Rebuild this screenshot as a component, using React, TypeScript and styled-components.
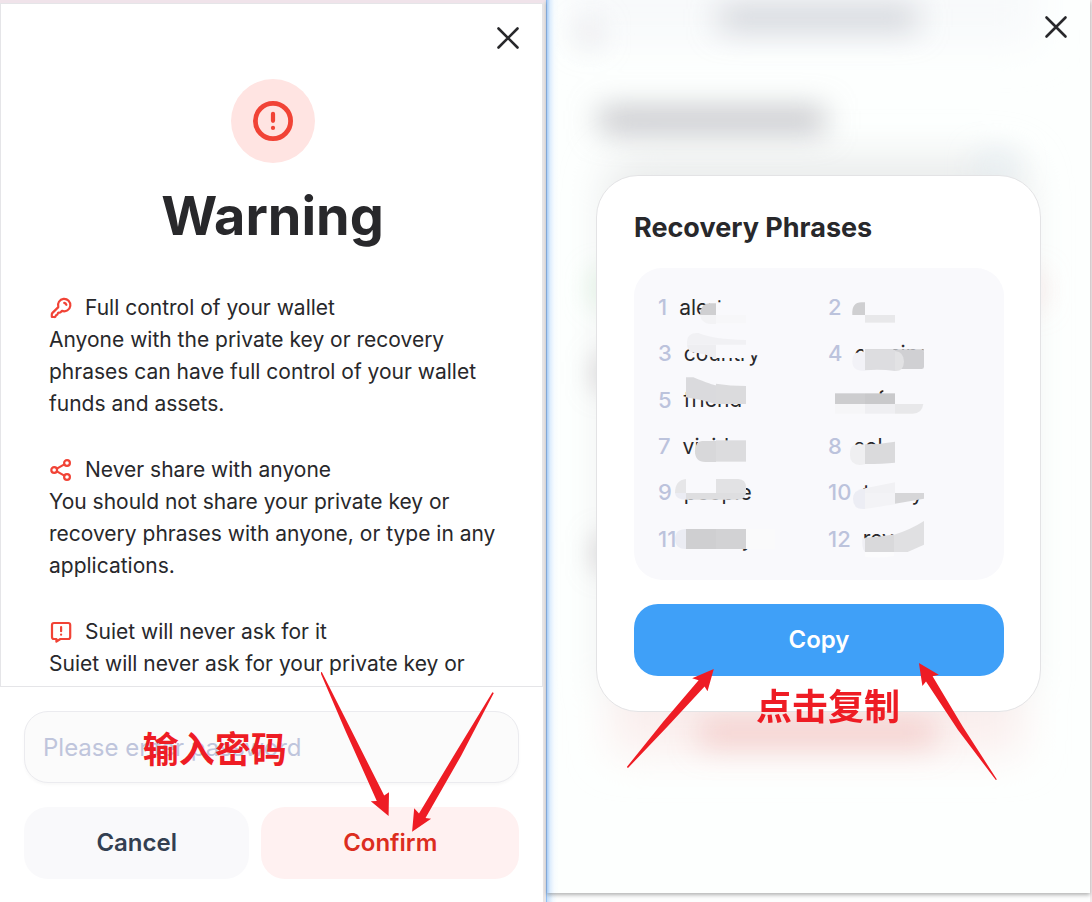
import React from "react";
import styled, { createGlobalStyle } from "styled-components";

const GlobalStyle = createGlobalStyle`
  *, *::before, *::after { box-sizing: border-box; }
  body {
    margin: 0;
    background: #ffffff;
    color: #28282b;
    font-family: Inter, "Noto Sans CJK SC", sans-serif;
  }
  h1, h2, h3, p, ol { margin: 0; padding: 0; }
  button, input { font-family: inherit; }
`;

const annotationRed = "#ee1c24";
const boxTint = "#f9f9fc";

const Page = styled.div`
  display: grid;
  grid-template-columns: minmax(0, 1fr) minmax(0, 1fr);
  min-height: 100vh;
`;

const WarningPane = styled.main`
  display: flex;
  flex-direction: column;
  background: #ffffff;
  border-top: 3px solid #f0e3ea;
  border-right: 3px solid #e9e6e7;
`;

const WarningBody = styled.section`
  position: relative;
  flex: 1;
  padding: 75px 46px 0 48px;
  border: 1px solid #e5e5e8;
`;

const CloseButton = styled.button<{ $top: number }>`
  position: absolute;
  top: ${(p) => p.$top}px;
  right: 22px;
  width: 24px;
  height: 24px;
  padding: 0;
  border: 0;
  background: none;
  color: #28282b;
  svg { display: block; }
`;

const AlertBadge = styled.div`
  display: flex;
  align-items: center;
  justify-content: center;
  width: 84px;
  height: 84px;
  margin: 0 auto;
  border-radius: 50%;
  background: #ffe4e2;
`;

const Heading = styled.h1`
  margin-top: 20px;
  font-size: 54px;
  line-height: 66px;
  font-weight: 700;
  text-align: center;
`;

const Notices = styled.div`
  display: flex;
  flex-direction: column;
  gap: 34px;
  margin-top: 43px;
`;

const NoticeTitle = styled.h2`
  display: flex;
  align-items: center;
  gap: 13px;
  font-size: 21px;
  line-height: 32px;
  font-weight: 400;
  color: #28282b;
  svg { margin-left: 1px; }
`;

const NoticeText = styled.p`
  font-size: 21px;
  line-height: 32px;
`;

const Footer = styled.form`
  display: flex;
  flex-direction: column;
  gap: 24px;
  padding: 24px 24px 23px;
`;

const Field = styled.div`
  position: relative;
`;

const PasswordInput = styled.input`
  display: block;
  width: 100%;
  height: 72px;
  padding: 0 18px;
  border: 1px solid #ebebef;
  border-radius: 24px;
  background: #fbfbfb;
  box-shadow: 0 2px 3px rgba(0, 0, 0, 0.03);
  font-size: 24px;
  &::placeholder { color: #bfc5dc; opacity: 1; }
`;

const Actions = styled.div`
  display: grid;
  grid-template-columns: 7fr 8fr;
  gap: 12px;
`;

const ActionSlot = styled.div`
  position: relative;
`;

const tones = {
  neutral: { bg: "#f9f9fb", fg: "#333f51" },
  danger: { bg: "#fff1f1", fg: "#dc2d20" },
  primary: { bg: "#3fa0f8", fg: "#ffffff" },
};

const ActionButton = styled.button<{ $tone: keyof typeof tones }>`
  display: block;
  width: 100%;
  height: 72px;
  padding: 0 0 2px;
  border: 0;
  border-radius: 24px;
  font-size: 24px;
  font-weight: 600;
  background: ${(p) => tones[p.$tone].bg};
  color: ${(p) => tones[p.$tone].fg};
`;

const Annotation = styled.span<{ $left: string; $top: number }>`
  position: absolute;
  left: ${(p) => p.$left};
  top: ${(p) => p.$top}px;
  font-family: "Noto Sans CJK SC", sans-serif;
  font-size: 36px;
  line-height: 40px;
  font-weight: 700;
  white-space: nowrap;
  color: ${annotationRed};
  pointer-events: none;
`;

const ArrowLayer = styled.svg<{ $left: string; $top: number }>`
  position: absolute;
  left: ${(p) => p.$left};
  top: ${(p) => p.$top}px;
  fill: ${annotationRed};
  pointer-events: none;
`;

const PhrasePane = styled.div`
  display: flex;
  flex-direction: column;
  padding: 0 2px 9px 0;
  border-left: 1px solid #94bff3;
  background: linear-gradient(90deg, #c4def9, #f2f9ff 6px, #fdfefe 10px, #fdfefe calc(100% - 2px), #f3e9eb calc(100% - 2px));
`;

const Overlay = styled.aside`
  position: relative;
  flex: 1;
  display: flex;
  align-items: center;
  padding: 0 49px 6px;
  overflow: hidden;
  background: #fdfffe;
  &::before {
    content: "";
    position: absolute;
    z-index: 1;
    inset: 0 auto 0 0;
    width: 12px;
    background: linear-gradient(90deg, #a9cdf7, rgba(216, 234, 252, 0.9) 3px, rgba(242, 249, 255, 0.6) 7px, rgba(253, 255, 254, 0));
  }
`;

const OverlayFrame = styled.div`
  display: flex;
  flex: 1;
  box-shadow: 0 2px 4px rgba(0, 0, 0, 0.3);
`;

const BlurredContent = styled.svg`
  position: absolute;
  inset: 0;
  width: 100%;
  height: 100%;
`;

const Modal = styled.section`
  position: relative;
  flex: 1;
  padding: 33px 36px 35px 37px;
  border: 1px solid #e3e3e5;
  border-radius: 42px;
  background: #ffffff;
`;

const ModalTitle = styled.h2`
  font-size: 27px;
  line-height: 38px;
  font-weight: 700;
`;

const PhraseBox = styled.div`
  position: relative;
  margin: 21px 0 24px;
  padding: 16px 24px 18px;
  border-radius: 28px;
  background: ${boxTint};
`;

const PhraseList = styled.ol`
  display: grid;
  grid-template-columns: 170px 1fr;
  grid-auto-rows: 1fr;
  height: 278px;
  list-style: none;
`;

const Phrase = styled.li`
  display: flex;
  align-items: center;
  gap: 12px;
`;

const PhraseNumber = styled.span`
  font-size: 22px;
  font-weight: 500;
  color: #bcc3dc;
`;

const PhraseWord = styled.span`
  font-size: 21px;
  white-space: pre;
`;

const Smears = styled.svg`
  position: absolute;
  left: 0;
  top: 0;
`;

const CloseIcon = () => (
  <svg width="24" height="24" viewBox="0 0 24 24" fill="none" stroke="currentColor" strokeWidth="2.6" strokeLinecap="round">
    <path d="M2.5 2.5 21.5 21.5M21.5 2.5 2.5 21.5" />
  </svg>
);

const AlertIcon = () => (
  <svg width="42" height="42" viewBox="0 0 42 42" fill="none" stroke="#f14336">
    <circle cx="21" cy="21" r="17.6" strokeWidth="4.8" />
    <path d="M21 13.8V20.8M21 27.8v.2" strokeWidth="4.2" strokeLinecap="round" />
  </svg>
);

const NoticeIcon = ({ children }: { children: React.ReactNode }) => (
  <svg width="22" height="22" viewBox="0 0 22 22" fill="none" stroke="#f14336" strokeWidth="2.2" strokeLinecap="round" strokeLinejoin="round">
    {children}
  </svg>
);

const notices = [
  {
    title: "Full control of your wallet",
    text: "Anyone with the private key or recovery phrases can have full control of your wallet funds and assets.",
    icon: (
      <NoticeIcon>
        <path d="M8.3 10.1A6.2 6.2 0 1 1 12 13.9L10.6 15.3Q10 15.9 9 15.7T7.7 16.7 6.6 18 5.6 19.2 4.4 20H2.4Q1.8 20 1.8 19.4V17.4Q1.8 16.6 2.5 15.9Z" />
        <path d="M14.2 5.9Q15.8 6.2 16.4 7.8" />
      </NoticeIcon>
    ),
  },
  {
    title: "Never share with anyone",
    text: "You should not share your private key or recovery phrases with anyone, or type in any applications.",
    icon: (
      <NoticeIcon>
        <circle cx="17" cy="4" r="2.9" />
        <circle cx="4.2" cy="11" r="2.9" />
        <circle cx="17" cy="18" r="2.9" />
        <path d="M6.9 9.6 14.3 5.4M6.9 12.4l7.4 4.2" />
      </NoticeIcon>
    ),
  },
  {
    title: "Suiet will never ask for it",
    text: "Suiet will never ask for your private key or",
    icon: (
      <NoticeIcon>
        <path d="M4 2H18.2Q20.2 2 20.2 4V16Q20.2 18 18.2 18H10.4L6.4 20.6V18H4Q2 18 2 16V4Q2 2 4 2Z" />
        <path d="M11.1 6V10.2M11.1 13.6v.1" />
      </NoticeIcon>
    ),
  },
];

const phrases = ["alert", "", "country", "cassino", "friend", "suf", "vivid", "sol", "people", "t       y", "         y", "rev"];

const PhraseSmears = () => (
  <Smears width="369" height="312" viewBox="0 0 369 312" aria-hidden="true">
    <g transform="translate(-4 2) scale(0.33333)">
      <path fill={boxTint} d="M240 97H352V142H240Z" />
      <path fill="#cfcfd1" d="M258 100V135H210Q212 100 240 100Z" />
      <path fill="#f3f3f5" d="M210 135H258V162H240Q214 160 210 135Z" />
      <path fill="#f7f7f9" d="M258 135H348V160H258Z" />
      <path fill="#cfcfd1" d="M705 97V135H667Q664 97 695 97Z" />
      <path fill="#e8e8ea" d="M705 135H795V158H705Z" />
      <path fill={boxTint} d="M240 210H400V256H362V264H258V260H240Z" />
      <path fill="#f1f1f4" d="M171 224V215Q172 187 205 189 250 208 348 210V224Z" />
      <path fill="#eeeef1" d="M171 224H258V266Q225 250 182 246 173 240 171 224Z" />
      <path fill={boxTint} d="M700 236H790V242H700ZM700 242H925V300H700ZM880 220H925V300H880Z" />
      <path fill="#d0d0d3" d="M705 238H876Q882 238 882 246V290Q882 297 875 297H705Z" />
      <path fill="#f2f2f7" d="M705 246V303Q667 305 667 274 667 252 680 248Z" />
      <path fill="#dddde0" d="M705 240H795V303Q750 297 705 301Z" />
      <path fill="#e2e2e4" d="M795 243Q822 246 822 275 820 305 795 303Z" />
      <path fill="#dadadd" d="M168 322H190Q250 346 258 346V402Q210 388 168 382Z" />
      <path fill="#dbdbdd" d="M258 341Q300 348 348 348V402H258Z" />
      <path fill={boxTint} d="M590 360H640V425H590ZM615 355H735V371H615ZM760 355H830V402H760ZM615 402H850V432H615ZM150 413H360V430H150Z" />
      <path fill="#cdcdcf" d="M615 370H705V402H615Z" />
      <path fill="#c9c9cb" d="M705 370H795V402H705Z" />
      <path fill="#f6f6f8" d="M615 402H705V431H615Z" />
      <path fill="#efeff2" d="M705 402H795V431H705Z" />
      <path fill="#e8e8ea" d="M795 402H880Q876 431 848 431H795Z" />
    </g>
    <g transform="translate(-4 142) scale(0.33333)">
      <path fill="#d8d8da" d="M258 93V156H226Q195 156 195 124 196 93 216 93Z" />
      <path fill="#dcdcde" d="M258 91H348V155H258Z" />
      <path fill={boxTint} d="M765 80H860V140H795V98H765Z" />
      <path fill="#efeff1" d="M705 103V163Q660 172 660 134 660 105 676 104Z" />
      <path fill="#dadadc" d="M705 103Q750 103 795 95V158Q760 162 705 162Z" />
      <path fill={boxTint} d="M150 207H345V252H150Z" />
      <path fill="#e6e6e8" d="M168 207V249H135Q135 210 168 207Z" />
      <path fill="#ebecf3" d="M135 249H168V269Q137 269 135 249Z" />
      <path fill="#e2e2e4" d="M258 207H325Q348 208 348 232V249H258Z" />
      <path fill="#dedee0" d="M168 249H348Q344 269 325 269H168Z" />
      <path fill={boxTint} d="M810 225H890V264H810Z" />
      <path fill="#ecedf4" d="M705 235V297Q669 300 669 266 669 240 705 235Z" />
      <path fill="#f1f1f4" d="M705 235 795 217V249H705Z" />
      <path fill="#f3f3f6" d="M705 249H795V283L705 297Z" />
      <path fill="#d6d6d8" d="M795 249H882V266L795 281Z" />
      <path fill="#ebecf3" d="M168 357V417Q135 417 135 387T168 357Z" />
      <path fill="#cfcfd1" d="M168 357H258V417H168Z" />
      <path fill="#d2d2d4" d="M258 357H348V417H258Z" />
      <path fill="#fafafb" d="M348 357H435V417H348Z" />
      <path fill="#efeff4" d="M705 385V426Q695 420 697 385Z" />
      <path fill="#d9d9db" d="M705 383Q760 380 792 373V426H705Z" />
      <path fill="#e0e0e2" d="M792 374Q840 360 882 333V404L833 426H792Z" />
      <path fill="#fcfcfd" d="M705 426H792V438Q750 446 705 440Z" />
    </g>
  </Smears>
);

export default function App() {
  return (
    <>
      <GlobalStyle />
      <Page>
        <WarningPane>
          <WarningBody>
            <CloseButton $top={22} type="button" aria-label="Close warning">
              <CloseIcon />
            </CloseButton>
            <AlertBadge>
              <AlertIcon />
            </AlertBadge>
            <Heading>Warning</Heading>
            <Notices>
              {notices.map((n) => (
                <article key={n.title}>
                  <NoticeTitle>
                    {n.icon}
                    {n.title}
                  </NoticeTitle>
                  <NoticeText>{n.text}</NoticeText>
                </article>
              ))}
            </Notices>
          </WarningBody>
          <Footer onSubmit={(e) => e.preventDefault()}>
            <Field>
              <PasswordInput type="password" aria-label="Password" placeholder="Please enter password" />
              <Annotation $left="24%" $top={16}>输入密码</Annotation>
            </Field>
            <Actions>
              <ActionSlot>
                <ActionButton type="button" $tone="neutral">Cancel</ActionButton>
              </ActionSlot>
              <ActionSlot>
                <ActionButton type="submit" $tone="danger">Confirm</ActionButton>
                <ArrowLayer $left="23%" $top={-137} width="176" height="164" viewBox="321 670 176 164" aria-hidden="true">
                  <path d="M320.4 672.6 321.8 672 350.7 729 384.2 795.6 389 792.3 388.6 816 370.8 801.3 376.8 800.9 345.5 731Z" />
                  <path d="M492.4 692.2 493.8 693 461 756 425.5 818 431.1 818.7 412.1 831.7 414.2 808.3 419 813.4 456 752Z" />
                </ArrowLayer>
              </ActionSlot>
            </Actions>
          </Footer>
        </WarningPane>

        <PhrasePane>
          <OverlayFrame>
            <Overlay>
              <BlurredContent aria-hidden="true">
                <defs>
                  <filter id="soft" x="-100%" y="-200%" width="300%" height="500%">
                    <feGaussianBlur stdDeviation="15" />
                  </filter>
                  <filter id="wide" x="-30%" y="-50%" width="160%" height="200%">
                    <feGaussianBlur stdDeviation="20" />
                  </filter>
                </defs>
                <g filter="url(#wide)">
                  <rect x="20" y="-40" width="470" height="84" fill="#f8f9fb" />
                  <rect x="58" y="158" width="422" height="550" rx="30" fill="#e9ebeb" />
                  <rect x="64" y="690" width="412" height="64" fill="#fbefee" />
                </g>
                <g filter="url(#soft)">
                  <rect x="172" y="6" width="198" height="24" fill="#c8cbd1" opacity="0.85" />
                  <rect x="32" y="24" width="20" height="20" fill="#d9dade" opacity="0.8" />
                  <rect x="52" y="108" width="226" height="24" fill="#b5b5bb" opacity="0.85" />
                  <rect x="430" y="156" width="40" height="18" fill="#e0eaf1" />
                  <rect x="48" y="276" width="26" height="24" fill="#cdebd0" />
                  <rect x="50" y="360" width="26" height="26" fill="#b3adb1" opacity="0.8" />
                  <rect x="50" y="540" width="26" height="26" fill="#b3adb1" opacity="0.8" />
                  <rect x="480" y="276" width="12" height="28" fill="#f4d0d0" />
                  <rect x="152" y="720" width="236" height="26" fill="#f0b8b6" opacity="0.65" />
                </g>
              </BlurredContent>
              <CloseButton $top={15} type="button" aria-label="Close recovery phrases">
                <CloseIcon />
              </CloseButton>
              <Modal>
                <ModalTitle>Recovery Phrases</ModalTitle>
                <PhraseBox>
                  <PhraseList>
                    {phrases.map((word, i) => (
                      <Phrase key={i}>
                        <PhraseNumber>{i + 1}</PhraseNumber>
                        <PhraseWord>{word}</PhraseWord>
                      </Phrase>
                    ))}
                  </PhraseList>
                  <PhraseSmears />
                </PhraseBox>
                <ActionSlot>
                  <ActionButton type="button" $tone="primary">Copy</ActionButton>
                  <Annotation $left="33%" $top={80}>点击复制</Annotation>
                  <ArrowLayer $left="-2%" $top={56} width="380" height="122" viewBox="627 660 380 122" aria-hidden="true">
                    <path d="M626.8 767 628 768 668 726 704.6 686.5 707.5 691.3 713.8 669 692.2 678.3 698.6 680.2 663 722Z" />
                    <path d="M996.9 779.4 995.8 780 958 730 926 681.6 922.4 686 918.9 663 938.8 674.7 932.6 676.2 963 727Z" />
                  </ArrowLayer>
                </ActionSlot>
              </Modal>
            </Overlay>
          </OverlayFrame>
        </PhrasePane>
      </Page>
    </>
  );
}
